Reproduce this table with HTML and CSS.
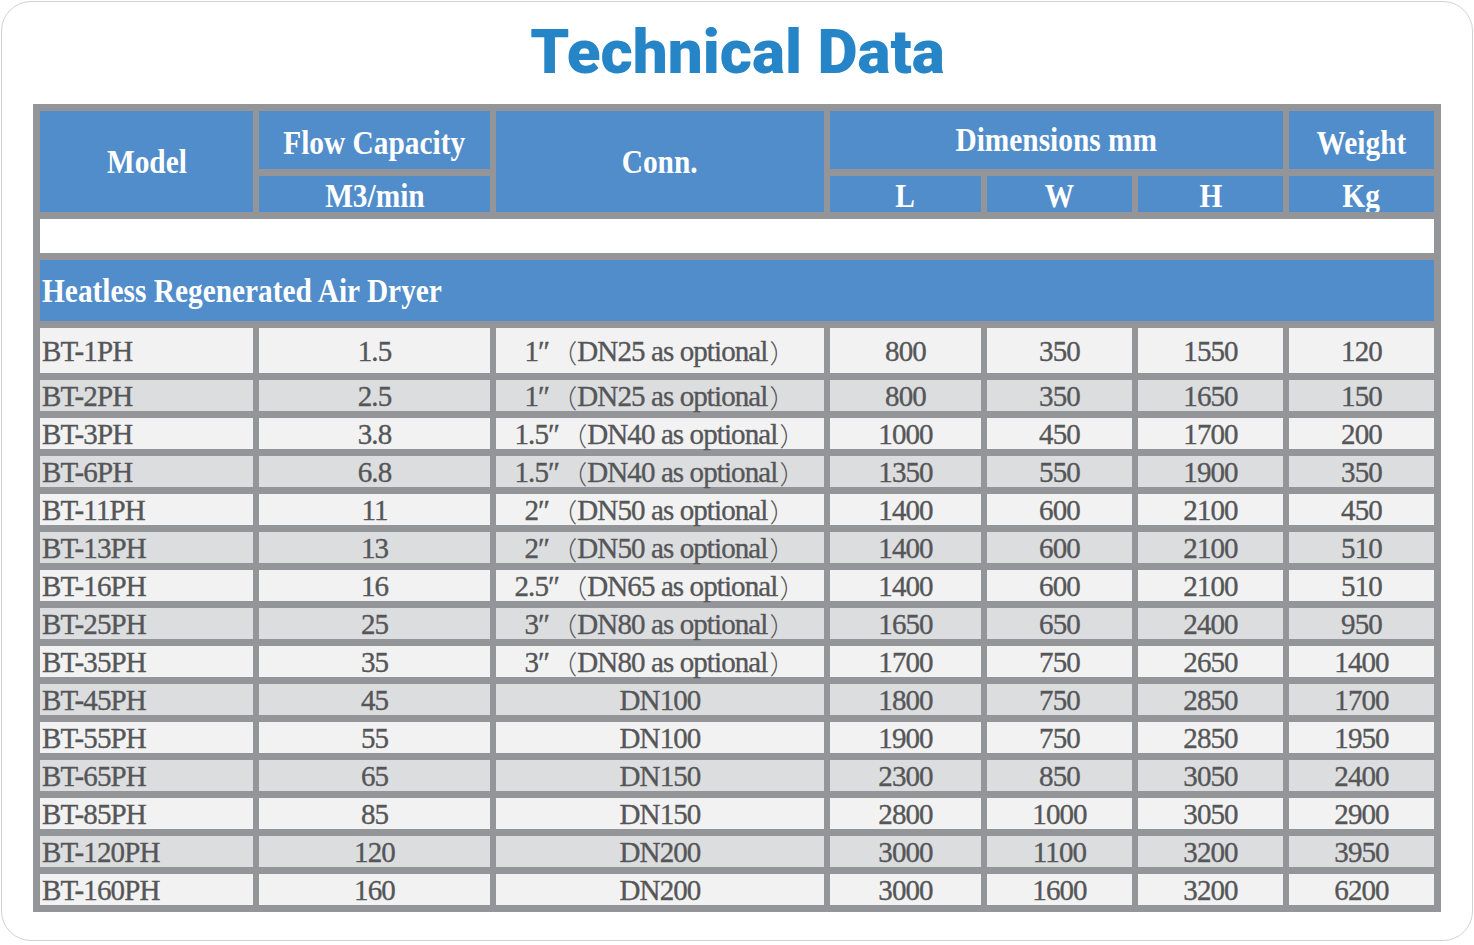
FILE: index.html
```html
<!DOCTYPE html>
<html lang="en">
<head>
<meta charset="utf-8">
<title>Technical Data</title>
<link rel="stylesheet" href="styles.css">
</head>
<body>
<div class="card">
  <h1 class="title">Technical Data</h1>
  <div class="spec">
    <div class="hd model-h"><span class="sq">Model</span></div>
    <div class="hd flow-h"><span class="sq">Flow Capacity</span></div>
    <div class="hd conn-h"><span class="sq">Conn.</span></div>
    <div class="hd dim-h"><span class="sq">Dimensions mm</span></div>
    <div class="hd weight-h"><span class="sq">Weight</span></div>
    <div class="hd sub"><span class="sq">M3/min</span></div>
    <div class="hd sub"><span class="sq">L</span></div>
    <div class="hd sub"><span class="sq">W</span></div>
    <div class="hd sub"><span class="sq">H</span></div>
    <div class="hd sub"><span class="sq">Kg</span></div>
    <div class="blank"></div>
    <div class="section"><span class="sq left">Heatless Regenerated Air Dryer</span></div>

    <div class="c name">BT-1PH</div><div class="c">1.5</div><div class="c">1″<span class="cj">（</span>DN25 as optional<span class="cj">）</span></div><div class="c">800</div><div class="c">350</div><div class="c">1550</div><div class="c">120</div>
    <div class="c name alt">BT-2PH</div><div class="c alt">2.5</div><div class="c alt">1″<span class="cj">（</span>DN25 as optional<span class="cj">）</span></div><div class="c alt">800</div><div class="c alt">350</div><div class="c alt">1650</div><div class="c alt">150</div>
    <div class="c name">BT-3PH</div><div class="c">3.8</div><div class="c">1.5″<span class="cj">（</span>DN40 as optional<span class="cj">）</span></div><div class="c">1000</div><div class="c">450</div><div class="c">1700</div><div class="c">200</div>
    <div class="c name alt">BT-6PH</div><div class="c alt">6.8</div><div class="c alt">1.5″<span class="cj">（</span>DN40 as optional<span class="cj">）</span></div><div class="c alt">1350</div><div class="c alt">550</div><div class="c alt">1900</div><div class="c alt">350</div>
    <div class="c name">BT-11PH</div><div class="c">11</div><div class="c">2″<span class="cj">（</span>DN50 as optional<span class="cj">）</span></div><div class="c">1400</div><div class="c">600</div><div class="c">2100</div><div class="c">450</div>
    <div class="c name alt">BT-13PH</div><div class="c alt">13</div><div class="c alt">2″<span class="cj">（</span>DN50 as optional<span class="cj">）</span></div><div class="c alt">1400</div><div class="c alt">600</div><div class="c alt">2100</div><div class="c alt">510</div>
    <div class="c name">BT-16PH</div><div class="c">16</div><div class="c">2.5″<span class="cj">（</span>DN65 as optional<span class="cj">）</span></div><div class="c">1400</div><div class="c">600</div><div class="c">2100</div><div class="c">510</div>
    <div class="c name alt">BT-25PH</div><div class="c alt">25</div><div class="c alt">3″<span class="cj">（</span>DN80 as optional<span class="cj">）</span></div><div class="c alt">1650</div><div class="c alt">650</div><div class="c alt">2400</div><div class="c alt">950</div>
    <div class="c name">BT-35PH</div><div class="c">35</div><div class="c">3″<span class="cj">（</span>DN80 as optional<span class="cj">）</span></div><div class="c">1700</div><div class="c">750</div><div class="c">2650</div><div class="c">1400</div>
    <div class="c name alt">BT-45PH</div><div class="c alt">45</div><div class="c alt">DN100</div><div class="c alt">1800</div><div class="c alt">750</div><div class="c alt">2850</div><div class="c alt">1700</div>
    <div class="c name">BT-55PH</div><div class="c">55</div><div class="c">DN100</div><div class="c">1900</div><div class="c">750</div><div class="c">2850</div><div class="c">1950</div>
    <div class="c name alt">BT-65PH</div><div class="c alt">65</div><div class="c alt">DN150</div><div class="c alt">2300</div><div class="c alt">850</div><div class="c alt">3050</div><div class="c alt">2400</div>
    <div class="c name">BT-85PH</div><div class="c">85</div><div class="c">DN150</div><div class="c">2800</div><div class="c">1000</div><div class="c">3050</div><div class="c">2900</div>
    <div class="c name alt">BT-120PH</div><div class="c alt">120</div><div class="c alt">DN200</div><div class="c alt">3000</div><div class="c alt">1100</div><div class="c alt">3200</div><div class="c alt">3950</div>
    <div class="c name">BT-160PH</div><div class="c">160</div><div class="c">DN200</div><div class="c">3000</div><div class="c">1600</div><div class="c">3200</div><div class="c">6200</div>
  </div>
</div>
</body>
</html>
```

FILE: styles.css
```css
html, body {
  margin: 0;
  padding: 0;
  background: #ffffff;
}

.card {
  margin: 1px;
  box-sizing: border-box;
  width: 1472px;
  border: 1px solid #d2d2d2;
  border-radius: 30px;
  padding: 15px 30px 28px 31px;
  background: #ffffff;
}

.title {
  margin: 0 0 17px 0;
  height: 70px;
  line-height: 70px;
  text-align: center;
  font-family: Roboto, "Liberation Sans", sans-serif;
  font-weight: 900;
  font-size: 62px;
  letter-spacing: 0;
  color: #2585c7;
}

.spec {
  display: grid;
  grid-template-columns: 213px 231px 328px 151px 145px 145px 145px;
  grid-template-rows: 58px 36px 34px 61px 45px repeat(14, 31px);
  column-gap: 6px;
  row-gap: 7px;
  padding: 7px;
  background: #939598;
  width: 1408px;
  box-sizing: border-box;
}

.hd {
  background: #518dca;
  color: #ffffff;
  font-family: "Liberation Serif", "Times New Roman", serif;
  font-weight: bold;
  font-size: 33px;
  line-height: 36px;
  display: flex;
  align-items: center;
  justify-content: center;
  overflow: hidden;
}

.sq {
  display: inline-block;
  white-space: nowrap;
  transform: scaleX(0.89);
}

.sq.left {
  transform-origin: left center;
}

.model-h {
  grid-column: 1;
  grid-row: 1 / 3;
}

.flow-h {
  grid-column: 2;
  grid-row: 1;
  padding-top: 5px;
}

.conn-h {
  grid-column: 3;
  grid-row: 1 / 3;
}

.dim-h {
  grid-column: 4 / 7;
  grid-row: 1;
}

.weight-h {
  grid-column: 7;
  grid-row: 1;
  padding-top: 5px;
}

.sub {
  grid-row: 2;
  padding-top: 3px;
}

.blank {
  grid-column: 1 / -1;
  background: #ffffff;
}

.section {
  grid-column: 1 / -1;
  background: #518dca;
  color: #ffffff;
  font-family: "Liberation Serif", "Times New Roman", serif;
  font-weight: bold;
  font-size: 33px;
  line-height: 36px;
  display: flex;
  align-items: center;
  padding-left: 2px;
}

.c {
  background: #f2f2f2;
  color: #555658;
  font-family: "Liberation Serif", "Times New Roman", serif;
  font-weight: normal;
  font-size: 29px;
  line-height: 31px;
  letter-spacing: -0.9px;
  -webkit-text-stroke: 0.35px #555658;
  display: flex;
  align-items: center;
  justify-content: center;
  white-space: nowrap;
  padding-top: 2px;
  box-sizing: border-box;
}

.cj {
  font-family: "Noto Sans CJK SC", sans-serif;
  font-weight: 300;
  font-size: 26px;
  line-height: 20px;
  letter-spacing: 0;
  -webkit-text-stroke: 0;
  margin-left: 2px;
}

.c.alt {
  background: #dcdddf;
}

.c.name {
  justify-content: flex-start;
  padding-left: 2px;
}
```
